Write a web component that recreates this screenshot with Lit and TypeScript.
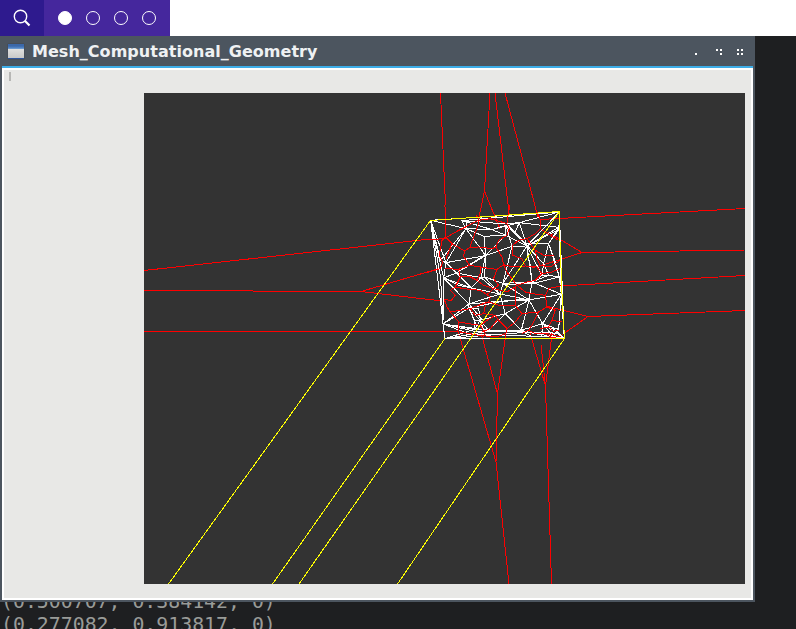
import { LitElement, html, css, svg } from "lit";
import { customElement } from "lit/decorators.js";

// Canvas-space rays that leave the point cloud.
const CELL_RAYS = [
  "440.5,93 445.5,205", "490,93 484.5,191 478,222", "484.5,191 500,229", "495,93 509.5,217",
  "505,93 538,217", "144,270.5 426,239.5", "144,290.5 361,291.5 441,268",
  "361,291.5 442,301", "144,331.5 457,331.5", "745,208.5 540,219.5",
  "745,250 582,252.5 548,232", "582,252.5 556,261 532,268", "745,275.5 560,286",
  "745,310.5 588,316.5 546,306", "588,316.5 559,337 548,332",
  "509,584 496,462 458,331", "496,462 497.5,394 481,333", "497.5,394 506,333",
  "551.5,584 545.5,386 530,333", "545.5,386 552,334", "545.5,386 541,345",
];

// Dense part of the drawing, in thirds of a pixel from (425, 205).
const CELLS = [
  "59,0 62,97", "0,104 38,102 62,97 80,115 118,137 133,127 160,55",
  "62,97 50,105 42,150 52,170 45,190 0,203", "80,115 70,140 62,160",
  "62,97 95,78 160,45 195,40 245,55", "160,55 160,40 152,30", "118,137 115,153 133,180 100,192 60,190",
  "133,127 160,125 200,130 212,125 220,105 245,90 252,70 245,55",
  "133,180 165,185 195,190 215,192 235,178 230,155 212,125", "253,0 245,55 252,70",
  "235,178 262,185 300,182 290,160 262,150 262,120 280,105 305,100 330,85 345,70 345,42 335,20",
  "345,70 375,90 400,105", "305,100 330,135 335,160 345,180 375,185 405,165",
  "330,135 355,150 385,150", "300,182 335,185 350,205 330,225 305,230 275,240",
  "350,205 380,200 405,190", "215,192 205,220 220,240 205,250 175,240 155,225 165,205 165,185",
  "100,192 105,215 90,245 75,255 90,270 78,285 57,283", "90,245 115,250 165,255 185,268",
  "105,215 135,215 155,225", "57,283 65,305 75,320",
  "75,320 105,315 135,310 160,300 190,290 195,275 185,268 205,250",
  "75,320 100,350 100,370 95,379", "135,310 150,330 175,325 180,300",
  "205,250 245,260 270,245 275,240 300,260 320,265 360,270 370,250 410,241",
  "270,245 270,280 270,300 290,325 340,320 365,305 360,270",
  "190,290 220,300 245,300 270,300", "175,325 210,330 220,345 245,370 270,350 290,325",
  "100,350 130,355 165,360 185,345 210,330", "165,360 180,385 170,399",
  "340,320 325,350 310,375 290,385", "365,305 390,315 380,345 410,350",
  "245,370 240,395", "310,375 330,385 365,385 390,390", "345,370 370,365 385,378 400,375",
  "360,385 375,395 400,400", "380,345 370,365", "105,380 160,390 215,395 240,385",
  "215,345 195,370 170,380", "235,178 245,200 275,240",
];

const MESH = [
  // outline and slivers along it
  "16,45 402,20", "16,45 59,400 417,399 402,20", "16,45 46,218 53,356", "16,45 55,218 53,356",
  "16,45 46,165 62,172 16,45", "53,356 59,400", "402,20 408,267 417,399", "401,66 408,267",
  // upper band
  "16,45 122,70 110,46 242,56 282,52 402,20", "110,46 402,20", "122,70 46,165",
  "122,70 62,172", "125,52 122,70 176,93 242,90", "122,70 181,151", "122,70 200,73 242,60",
  "110,46 200,73 242,90", "176,93 181,151 242,90 242,60", "282,52 401,66 402,20",
  "282,52 200,73", "242,60 260,123 181,151", "242,60 305,122 282,52", "260,73 305,122 242,90",
  "242,60 270,80 282,52", "260,123 305,122 401,66", "305,122 401,72 370,115 305,116",
  "305,122 402,20", "401,66 370,115 402,215", "370,115 355,175 350,210", "370,115 390,170 402,215",
  "305,122 355,175 370,210 402,215", "305,122 350,210 370,210", "320,140 355,175",
  "305,122 320,230 350,210", "305,140 315,180 320,230", "245,55 315,130",
  // middle band
  "62,172 181,151 93,203 62,172", "62,172 55,218 93,203 181,148", "62,172 93,203 138,248 55,218",
  "93,203 167,217 138,248", "181,151 167,217 224,266", "181,151 178,215 233,234",
  "167,217 178,215 224,266 233,234 260,123", "233,234 305,122", "233,234 320,230 370,210",
  "233,237 320,235 402,215", "233,234 311,284 320,230 408,267 311,284 224,266",
  "55,218 100,240 138,248 131,296", "131,296 224,266",
  "131,296 53,356 131,308 230,288 311,284",
  "131,296 200,290 311,281", "46,218 53,356", "138,248 224,266 230,288", "402,215 408,267",
  "370,210 402,215", "55,218 131,296",
  // lower band
  "131,296 131,308 148,345 148,372 53,356", "131,308 165,345 190,375 240,325 230,288",
  "131,296 172,345", "165,345 240,325 311,284 288,375 240,325", "165,345 148,372 190,375 288,375",
  "131,308 155,365", "311,284 352,355 408,267", "352,355 288,375 311,284", "352,355 400,373 408,267",
  "352,355 417,399 385,370 352,365", "352,355 350,390 288,375", "352,355 385,395 400,365",
  "53,356 148,378 288,378 417,399", "53,356 130,385 240,390 417,396", "59,400 148,372",
  "59,400 190,378", "59,400 288,382 352,380 400,385", "165,345 160,310 131,308",
  "148,345 165,345 175,375", "288,375 320,395", "385,370 380,395 417,399", "53,356 190,375",
];

const line = (cls: string) => (points: string) =>
  svg`<polyline class=${cls} points=${points}></polyline>`;

@customElement("mesh-view")
class MeshView extends LitElement {
  static styles = css`
    :host { display: block; width: 601px; height: 491px; background: #333; }
    svg { display: block; }
    polyline { fill: none; stroke-width: 1px; vector-effect: non-scaling-stroke; shape-rendering: crispEdges; }
    .cell { stroke: #f00; }
    .edge { stroke: #fff; }
    .hull { stroke: #ff0; }
  `;
  render() {
    return html`<svg width="601" height="491" viewBox="144 93 601 491">
      ${CELL_RAYS.map(line("cell"))}
      <g transform="translate(425.3 205.3) scale(.33333)">
        ${MESH.map(line("edge"))}
        ${CELLS.map(line("cell"))}
      </g>
      ${["430.5,220.5 559.5,211.5 559.5,228 562,294 564.5,338.5 490,338.5",
        "430.5,220.5 168.5,584", "559.5,211.5 299,584", "445,338.5 272.5,584",
        "564.5,338.5 397.5,584"].map(line("hull"))}
    </svg>`;
  }
}

@customElement("app-root")
class AppRoot extends LitElement {
  static styles = css`
    :host { display: flex; flex-direction: column; height: 629px; overflow: hidden; background: #1e1f21; }
    * { box-sizing: border-box; }
    .panel { height: 36px; flex: none; display: flex; background: #fff; }
    .search { width: 44px; background: #2e1a8e; }
    .desks { width: 126px; background: #45279d; display: flex; align-items: center; gap: 14px; padding-left: 14px; }
    .desk { width: 14px; height: 14px; border: 1.5px solid #fff; border-radius: 50%; }
    .active { background: #fff; }
    .window { width: 755px; height: 566px; flex: none; background: #4c555f; padding: 0 2px 2px; display: flex; flex-direction: column; }
    .title { height: 30px; flex: none; display: flex; align-items: center; padding-left: 6px; color: #eff1f3;
      font: bold 16px "DejaVu Sans", sans-serif; }
    .app { width: 16px; height: 15px; margin-right: 8px; margin-top: 1px; border-bottom: 1px solid #2f559d;
      background: linear-gradient(#3b68aa 0 2px, #5588c7 4px, #7da7d8 5px, #e0e0e0 5px, #c8c8c8); box-shadow: 0 0 1px #29313b; }
    .name { flex: 1; white-space: nowrap; letter-spacing: .03px; }
    .client { flex: 1; border: 2px solid #fff; border-top: 0; background: #e8e8e6; display: flex; }
    .top { height: 4px; flex: none; background: linear-gradient(#3daee9 50%, #fff 50%); }
    .side { width: 140px; padding: 2px 0 0 5px; }
    .caret { width: 2px; height: 9px; background: #b7b7b5; }
    .view { padding-top: 23px; }
    .console { margin: 0; flex: none; height: 27px; overflow: hidden; color: #999b98; padding-left: 1px;
      font: 19.85px/23px "DejaVu Sans Mono", monospace; }
    .log { margin-top: -12px; white-space: pre; }
  `;
  render() {
    return html`
      <div class="panel">
        <div class="search"><svg width="44" height="36" fill="none" stroke="#fff">
          <circle cx="20.5" cy="16.5" r="6.2" stroke-width="1.4"></circle>
          <path d="M24.8 20.8 29.5 25.5" stroke-width="2.2"></path></svg></div>
        <div class="desks"><i class="desk active"></i><i class="desk"></i><i class="desk"></i><i class="desk"></i></div>
      </div>
      <div class="window">
        <div class="title"><i class="app"></i><span class="name">Mesh_Computational_Geometry</span>
          <svg width="60" height="30" fill="#fff" shape-rendering="crispEdges">
            <path d="M2 17h2v2h-2zM23 13h2v2h-2zM27 13h2v2h-2zM27 17h2v2h-2zM44 13h2v2h-2zM48 13h2v2h-2zM44 17h2v2h-2zM48 17h2v2h-2z"></path>
          </svg></div>
        <div class="top"></div>
        <div class="client">
          <div class="side"><div class="caret"></div></div>
          <div class="view"><mesh-view></mesh-view></div>
        </div>
      </div>
      <div class="console"><div class="log">(0.500707, 0.384142, 0)
(0.277082, 0.913817, 0)</div></div>`;
  }
}
